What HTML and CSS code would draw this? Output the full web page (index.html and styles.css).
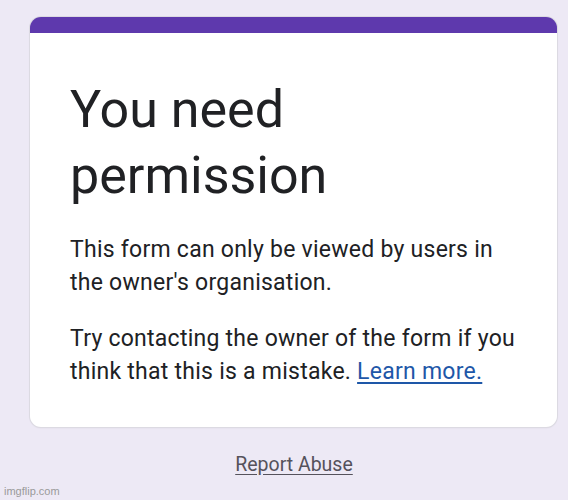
FILE: index.html
```html
<!DOCTYPE html>
<html>
<head>
<meta charset="utf-8">
<link rel="stylesheet" href="styles.css">
</head>
<body>
<main class="page">
  <section class="card">
    <div class="card-body">
      <h1 class="title">You need permission</h1>
      <p class="text">This form can only be viewed by users in the owner's organisation.</p>
      <p class="text">Try contacting the owner of the form if you think that this is a mistake. <a class="link" href="#">Learn more.</a></p>
    </div>
  </section>
  <div class="footer"><a class="report" href="#">Report Abuse</a></div>
</main>
<div class="watermark">imgflip.com</div>
</body>
</html>
```
FILE: styles.css
```css
html, body {
  margin: 0;
  padding: 0;
}
body {
  background: #ede9f5;
  font-family: Roboto, "Liberation Sans", sans-serif;
  width: 568px;
  height: 500px;
  position: relative;
  overflow: hidden;
}
.page {
  padding-top: 17px;
}
.card {
  margin-left: 30px;
  width: 527px;
  background: #ffffff;
  border-radius: 11px;
  border-top: 16px solid #5e39ad;
  box-shadow: 0 0 0 1px #dcdae2, 0 1px 2px rgba(0,0,0,0.08);
  box-sizing: border-box;
}
.card-body {
  padding: 44px 37px 39px 40px;
}
.title {
  margin: 0;
  font-weight: 400;
  font-size: 52px;
  line-height: 66px;
  color: #202124;
  width: 300px;
}
.text {
  margin: 24px 0 0 0;
  font-size: 23px;
  letter-spacing: 0.25px;
  line-height: 33px;
  color: #202124;
}
.text + .text {
  margin-top: 23px;
}
.link {
  color: #1e57a8;
  text-decoration: underline;
  text-underline-offset: 3px;
}
.footer {
  margin-top: 26px;
  text-align: center;
  font-size: 19.5px;
  line-height: 24px;
  padding-left: 20px;
}
.report {
  color: #55525c;
  text-decoration: underline;
  text-underline-offset: 3px;
}
.watermark {
  position: absolute;
  left: 4px;
  bottom: 3px;
  font-family: "Liberation Sans", sans-serif;
  font-size: 11px;
  color: #9a9a9a;
}
```
